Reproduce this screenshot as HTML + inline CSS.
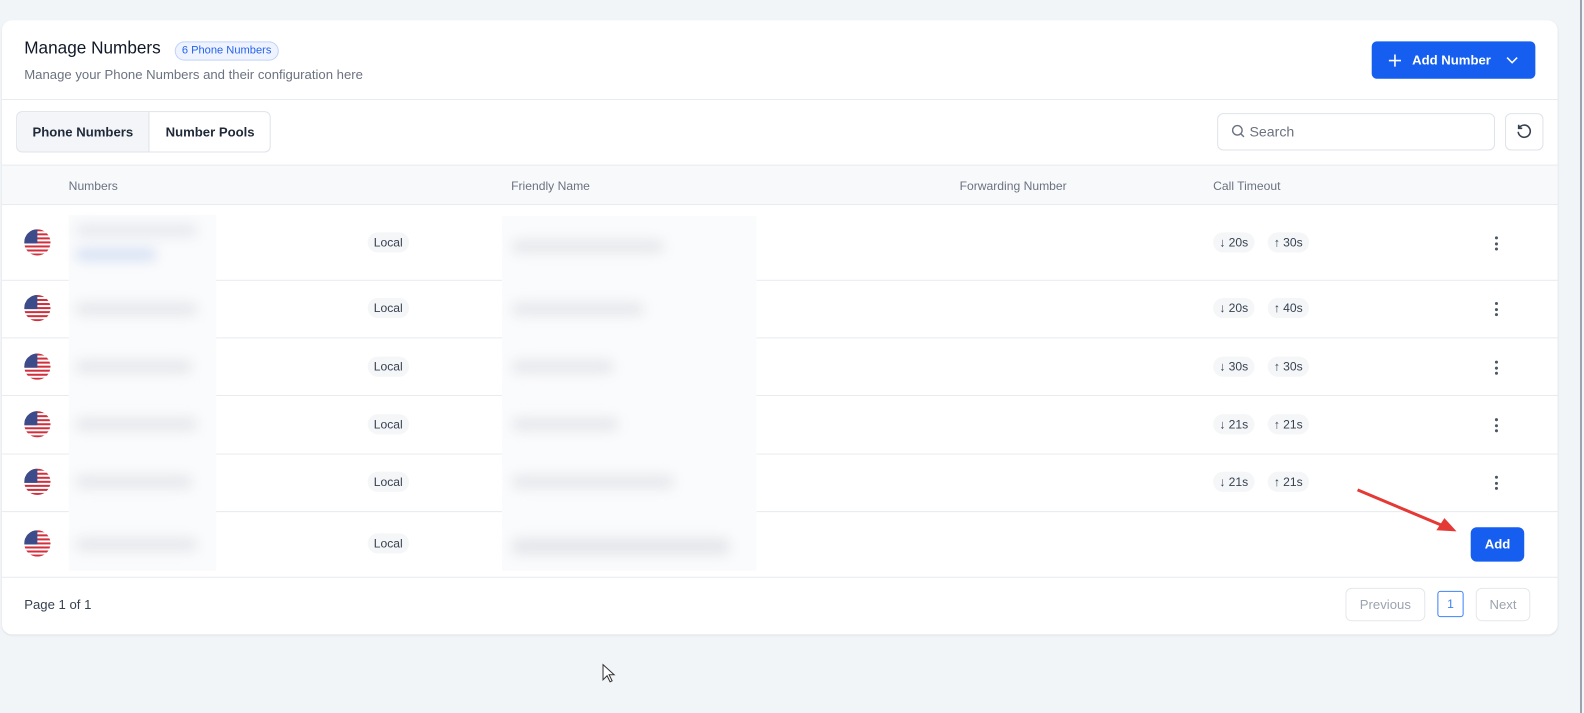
<!DOCTYPE html>
<html><head><meta charset="utf-8"><style>
*{box-sizing:border-box;margin:0;padding:0}
html{width:1584px;height:713px;overflow:hidden}
body{width:1584px;height:713px;background:#f1f5f8;font-family:"Liberation Sans",sans-serif;position:relative;overflow:hidden;color:#1f2937}
#w{position:absolute;left:0;top:0;width:1568px;height:706px;transform:scale(1.0101);transform-origin:0 0}
.abs{position:absolute}
.card{left:2px;top:20px;width:1540px;height:608px;background:#fff;border-radius:10px;box-shadow:0 1px 2px rgba(0,0,0,.08)}
.hline{position:absolute;left:2px;width:1540px;height:1px;background:#e8ebef}
.pill{position:absolute;background:#f4f6f8;border-radius:10px;font-size:12px;color:#374151;height:20px;line-height:20px;padding:0 6px}
.flag{position:absolute;left:24px;width:26px;height:26px}
.dots{position:absolute;left:1480px;width:4px}
.dots i{display:block;width:3px;height:3px;border-radius:50%;background:#4b5563;margin-bottom:2.5px}
.th{position:absolute;top:177px;font-size:12px;color:#6b7280}
.blur{position:absolute;background:#e4e6ea;filter:blur(6px);height:12px;border-radius:6px}
</style></head><body>
<div class="abs" style="left:1580px;top:0;width:2px;height:713px;background:#9ca3af"></div>
<div id="w">
<div class="abs card"></div>
<div class="abs" style="left:24px;top:38px;font-size:17px;color:#111827">Manage Numbers</div>
<div class="abs" style="left:173px;top:41px;height:19px;padding:0 6px;border:1px solid #bfd3fb;background:#eef3ff;border-radius:10px;font-size:11px;line-height:17px;color:#2563eb">6 Phone Numbers</div>
<div class="abs" style="left:24px;top:66px;font-size:13px;color:#6b7280">Manage your Phone Numbers and their configuration here</div>
<div class="abs" style="left:1358px;top:41px;width:162px;height:37px;background:#155eef;border-radius:5px;color:#fff;font-size:13px;font-weight:bold;line-height:37px">
<svg class="abs" style="left:16px;top:12px" width="14" height="14" viewBox="0 0 14 14"><path d="M7 1v12M1 7h12" stroke="#fff" stroke-width="1.6"/></svg>
<span class="abs" style="left:40px">Add Number</span>
<svg class="abs" style="left:133px;top:14px" width="12" height="10" viewBox="0 0 12 10"><path d="M1 2l5 5 5-5" stroke="#fff" stroke-width="1.5" fill="none"/></svg>
</div>
<div class="hline" style="top:98px"></div>
<div class="abs" style="left:16px;top:110px;width:252px;height:41px;border:1px solid #dfe3e8;border-radius:6px;overflow:hidden;font-size:13px;font-weight:bold;color:#1f2937">
<div class="abs" style="left:0;top:0;width:131px;height:41px;background:#f3f5f8;border-right:1px solid #dfe3e8;line-height:39px;text-align:center">Phone Numbers</div>
<div class="abs" style="left:131px;top:0;width:120px;line-height:39px;text-align:center">Number Pools</div>
</div>
<div class="abs" style="left:1205px;top:112px;width:275px;height:37px;border:1px solid #dfe3e8;border-radius:6px"></div>
<svg class="abs" style="left:1219px;top:123px" width="14" height="14" viewBox="0 0 14 14"><circle cx="6" cy="6" r="4.7" stroke="#6b7280" stroke-width="1.4" fill="none"/><path d="M9.5 9.5l3 3" stroke="#6b7280" stroke-width="1.4"/></svg>
<div class="abs" style="left:1237px;top:122px;font-size:14px;color:#6b7280">Search</div>
<div class="abs" style="left:1490px;top:112px;width:38px;height:37px;border:1px solid #dfe3e8;border-radius:6px"></div>
<svg class="abs" style="left:1500px;top:121px" width="18" height="18" viewBox="0 0 18 18"><path d="M4 5.5A6 6 0 1 1 3 9.5" stroke="#374151" stroke-width="1.6" fill="none"/><path d="M3.5 2.5v3.5H7" stroke="#374151" stroke-width="1.6" fill="none"/></svg>
<div class="abs" style="left:2px;top:163px;width:1540px;height:40px;background:#f8f9fb;border-top:1px solid #e8ebef;border-bottom:1px solid #e8ebef"></div>
<div class="th" style="left:68px">Numbers</div>
<div class="th" style="left:506px">Friendly Name</div>
<div class="th" style="left:950px">Forwarding Number</div>
<div class="th" style="left:1201px">Call Timeout</div>
<div class="hline" style="top:277px"></div><div class="hline" style="top:334px"></div><div class="hline" style="top:391px"></div><div class="hline" style="top:449px"></div><div class="hline" style="top:506px"></div><div class="hline" style="top:571px"></div>
<div class="abs" style="left:68px;top:213px;width:146px;height:352px;background:#fafbfc"></div>
<div class="abs" style="left:497px;top:214px;width:252px;height:351px;background:#fafbfc"></div>
<div class="blur" style="left:75px;top:222px;width:120px;background:#e6e8ee"></div>
<div class="blur" style="left:75px;top:246px;width:80px;background:#d6e0f4"></div>
<div class="blur" style="left:75px;top:300px;width:120px"></div>
<div class="blur" style="left:75px;top:357px;width:115px"></div>
<div class="blur" style="left:75px;top:414px;width:120px"></div>
<div class="blur" style="left:75px;top:471px;width:115px"></div>
<div class="blur" style="left:75px;top:533px;width:120px"></div>
<div class="blur" style="left:507px;top:238px;width:150px"></div>
<div class="blur" style="left:507px;top:300px;width:130px"></div>
<div class="blur" style="left:507px;top:357px;width:100px"></div>
<div class="blur" style="left:507px;top:414px;width:105px"></div>
<div class="blur" style="left:507px;top:471px;width:160px"></div>
<div class="blur" style="left:507px;top:533px;width:215px;height:16px"></div>
<svg width="0" height="0" style="position:absolute;left:0;top:0;overflow:hidden"><defs><clipPath id="c"><circle cx="13" cy="13" r="13"/></clipPath><g id="f"><g clip-path="url(#c)"><rect width="26" height="26" fill="#fff"/><rect y="0" width="26" height="2" fill="#d22f3c"/><rect y="4" width="26" height="2" fill="#d22f3c"/><rect y="8" width="26" height="2" fill="#d22f3c"/><rect y="12" width="26" height="2" fill="#d22f3c"/><rect y="16" width="26" height="2" fill="#d22f3c"/><rect y="20" width="26" height="2" fill="#d22f3c"/><rect y="24" width="26" height="2" fill="#d22f3c"/><rect width="13" height="14" fill="#3c4b8a"/></g></g></defs></svg>
<svg class="flag" style="top:227px"><use href="#f"/></svg>
<svg class="flag" style="top:292px"><use href="#f"/></svg>
<svg class="flag" style="top:350px"><use href="#f"/></svg>
<svg class="flag" style="top:407px"><use href="#f"/></svg>
<svg class="flag" style="top:464px"><use href="#f"/></svg>
<svg class="flag" style="top:525px"><use href="#f"/></svg>
<div class="pill" style="left:364px;top:230px">Local</div>
<div class="pill" style="left:364px;top:295px">Local</div>
<div class="pill" style="left:364px;top:353px">Local</div>
<div class="pill" style="left:364px;top:410px">Local</div>
<div class="pill" style="left:364px;top:467px">Local</div>
<div class="pill" style="left:364px;top:528px">Local</div>
<div class="pill" style="left:1201px;top:230px">↓ 20s</div><div class="pill" style="left:1255px;top:230px">↑ 30s</div>
<div class="pill" style="left:1201px;top:295px">↓ 20s</div><div class="pill" style="left:1255px;top:295px">↑ 40s</div>
<div class="pill" style="left:1201px;top:353px">↓ 30s</div><div class="pill" style="left:1255px;top:353px">↑ 30s</div>
<div class="pill" style="left:1201px;top:410px">↓ 21s</div><div class="pill" style="left:1255px;top:410px">↑ 21s</div>
<div class="pill" style="left:1201px;top:467px">↓ 21s</div><div class="pill" style="left:1255px;top:467px">↑ 21s</div>
<div class="dots" style="top:234px"><i></i><i></i><i></i></div>
<div class="dots" style="top:299px"><i></i><i></i><i></i></div>
<div class="dots" style="top:357px"><i></i><i></i><i></i></div>
<div class="dots" style="top:414px"><i></i><i></i><i></i></div>
<div class="dots" style="top:471px"><i></i><i></i><i></i></div>
<div class="abs" style="left:1456px;top:522px;width:53px;height:34px;background:#155eef;border-radius:6px;color:#fff;font-size:13px;font-weight:bold;line-height:34px;text-align:center">Add</div>
<svg class="abs" style="left:1340px;top:480px" width="106" height="50" viewBox="0 0 106 50"><path d="M4 5L92 42" stroke="#e53935" stroke-width="3"/><path d="M102 46L82 45L90 33Z" fill="#e53935"/></svg>
<div class="abs" style="left:24px;top:591px;font-size:13px;color:#374151">Page 1 of 1</div>
<div class="abs" style="left:1332px;top:582px;width:79px;height:33px;border:1px solid #e5e7eb;border-radius:6px;font-size:13px;color:#9ca3af;line-height:31px;text-align:center">Previous</div>
<div class="abs" style="left:1423px;top:585px;width:26px;height:26px;border:1px solid #3b82f6;border-radius:3px;font-size:12px;color:#3b82f6;line-height:24px;text-align:center">1</div>
<div class="abs" style="left:1461px;top:582px;width:54px;height:33px;border:1px solid #e5e7eb;border-radius:6px;font-size:13px;color:#9ca3af;line-height:31px;text-align:center">Next</div>
<svg class="abs" style="left:596px;top:657px" width="14" height="20" viewBox="0 0 14 20"><path d="M1 1v15l4-4 3 6 2-1-3-6h5z" fill="#fff" stroke="#333" stroke-width="1"/></svg>
</div>
</body></html>
